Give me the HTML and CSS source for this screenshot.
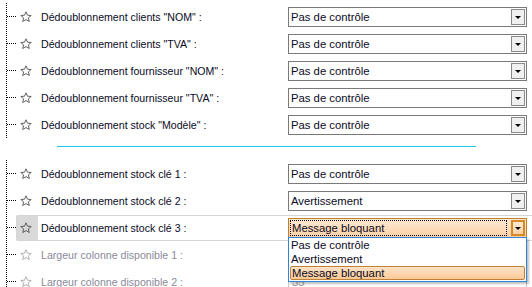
FILE: index.html
```html
<!DOCTYPE html>
<html lang="fr">
<head>
  <meta charset="UTF-8" />
  <title>Paramètres</title>
  <link rel="stylesheet" href="styles.css">
</head>
<body>
  <div class="tree">
    <div class="group">
      <div class="row">
        <span class="branch"></span>
        <span class="star"><svg viewBox="0 0 12 12"><path d="M6 .8l1.5 3.4 3.7.3-2.8 2.4.9 3.6L6 8.6 2.7 10.5l.9-3.6L.8 4.5l3.7-.3z"/></svg></span>
        <span class="label">Dédoublonnement clients "NOM" :</span>
        <div class="combo"><span class="value">Pas de contrôle</span><span class="btn"></span></div>
      </div>
      <div class="row">
        <span class="branch"></span>
        <span class="star"><svg viewBox="0 0 12 12"><path d="M6 .8l1.5 3.4 3.7.3-2.8 2.4.9 3.6L6 8.6 2.7 10.5l.9-3.6L.8 4.5l3.7-.3z"/></svg></span>
        <span class="label">Dédoublonnement clients "TVA" :</span>
        <div class="combo"><span class="value">Pas de contrôle</span><span class="btn"></span></div>
      </div>
      <div class="row">
        <span class="branch"></span>
        <span class="star"><svg viewBox="0 0 12 12"><path d="M6 .8l1.5 3.4 3.7.3-2.8 2.4.9 3.6L6 8.6 2.7 10.5l.9-3.6L.8 4.5l3.7-.3z"/></svg></span>
        <span class="label">Dédoublonnement fournisseur "NOM" :</span>
        <div class="combo"><span class="value">Pas de contrôle</span><span class="btn"></span></div>
      </div>
      <div class="row">
        <span class="branch"></span>
        <span class="star"><svg viewBox="0 0 12 12"><path d="M6 .8l1.5 3.4 3.7.3-2.8 2.4.9 3.6L6 8.6 2.7 10.5l.9-3.6L.8 4.5l3.7-.3z"/></svg></span>
        <span class="label">Dédoublonnement fournisseur "TVA" :</span>
        <div class="combo"><span class="value">Pas de contrôle</span><span class="btn"></span></div>
      </div>
      <div class="row">
        <span class="branch"></span>
        <span class="star"><svg viewBox="0 0 12 12"><path d="M6 .8l1.5 3.4 3.7.3-2.8 2.4.9 3.6L6 8.6 2.7 10.5l.9-3.6L.8 4.5l3.7-.3z"/></svg></span>
        <span class="label">Dédoublonnement stock "Modèle" :</span>
        <div class="combo"><span class="value">Pas de contrôle</span><span class="btn"></span></div>
      </div>
    </div>

    <div class="separator"><hr></div>

    <div class="group">
      <div class="row">
        <span class="branch"></span>
        <span class="star"><svg viewBox="0 0 12 12"><path d="M6 .8l1.5 3.4 3.7.3-2.8 2.4.9 3.6L6 8.6 2.7 10.5l.9-3.6L.8 4.5l3.7-.3z"/></svg></span>
        <span class="label">Dédoublonnement stock clé 1 :</span>
        <div class="combo"><span class="value">Pas de contrôle</span><span class="btn"></span></div>
      </div>
      <div class="row">
        <span class="branch"></span>
        <span class="star"><svg viewBox="0 0 12 12"><path d="M6 .8l1.5 3.4 3.7.3-2.8 2.4.9 3.6L6 8.6 2.7 10.5l.9-3.6L.8 4.5l3.7-.3z"/></svg></span>
        <span class="label">Dédoublonnement stock clé 2 :</span>
        <div class="combo"><span class="value">Avertissement</span><span class="btn"></span></div>
      </div>
      <div class="row current">
        <span class="branch"></span>
        <div class="hilite">
          <span class="star"><svg viewBox="0 0 12 12"><path d="M6 .8l1.5 3.4 3.7.3-2.8 2.4.9 3.6L6 8.6 2.7 10.5l.9-3.6L.8 4.5l3.7-.3z"/></svg></span>
          <span class="label">Dédoublonnement stock clé 3 :</span>
          <div class="combo open">
            <span class="value"><span class="focus">Message bloquant</span></span><span class="btn"></span>
            <ul class="list">
              <li>Pas de contrôle</li>
              <li>Avertissement</li>
              <li class="sel">Message bloquant</li>
            </ul>
          </div>
        </div>
      </div>
      <div class="row disabled">
        <span class="branch"></span>
        <span class="star"><svg viewBox="0 0 12 12"><path d="M6 .8l1.5 3.4 3.7.3-2.8 2.4.9 3.6L6 8.6 2.7 10.5l.9-3.6L.8 4.5l3.7-.3z"/></svg></span>
        <span class="label">Largeur colonne disponible 1 :</span>
        <div class="field"></div>
      </div>
      <div class="row disabled">
        <span class="branch"></span>
        <span class="star"><svg viewBox="0 0 12 12"><path d="M6 .8l1.5 3.4 3.7.3-2.8 2.4.9 3.6L6 8.6 2.7 10.5l.9-3.6L.8 4.5l3.7-.3z"/></svg></span>
        <span class="label">Largeur colonne disponible 2 :</span>
        <div class="field">35</div>
      </div>
    </div>
  </div>
</body>
</html>
```

FILE: styles.css
```css
body {
  margin: 0;
  padding: 3px 0 0 0;
  font-family: "Liberation Sans", Arial, sans-serif;
  font-size: 11px;
  color: #0a0a1e;
  background: #fff;
  overflow: hidden;
}
.tree {
  padding-left: 6px;
}
.group {
  border-left: 1px dotted #000;
}
.row {
  display: flex;
  align-items: center;
  height: 27px;
}
.branch {
  width: 9px;
  border-top: 1px dotted #000;
  flex: none;
}
.star {
  width: 12px;
  height: 12px;
  margin-left: 4px;
  flex: none;
}
.star svg {
  display: block;
  width: 12px;
  height: 12px;
  fill: none;
  stroke: #505050;
  stroke-width: 0.9;
}
.label {
  margin-left: 9px;
  width: 247px;
  flex: none;
  font-size: 10.6px;
  white-space: nowrap;
}
.combo, .field {
  position: relative;
  display: flex;
  align-items: center;
  width: 239px;
  height: 20px;
  box-sizing: border-box;
  border: 1px solid #7a7a7a;
  background: #fff;
  font-size: 11.3px;
}
.combo .value {
  flex: 1;
  padding-left: 2px;
  line-height: 16px;
}
.combo .btn {
  width: 14px;
  height: 16px;
  margin-right: 1px;
  box-sizing: border-box;
  border: 1px solid #8a8a8a;
  background: #f0f0f0;
  position: relative;
}
.combo .btn::after {
  content: "";
  position: absolute;
  left: 3px;
  top: 6px;
  border-left: 3px solid transparent;
  border-right: 3px solid transparent;
  border-top: 3px solid #000;
}
.separator {
  height: 22px;
  padding-top: 8px;
  box-sizing: border-box;
}
.separator hr {
  margin: 0 0 0 51px;
  width: 419px;
  border: none;
  border-top: 1px solid #1cc8e6;
}

/* current row */
.current .hilite {
  display: flex;
  align-items: center;
  flex: 1;
  height: 26px;
  box-sizing: border-box;
  border: 1px solid #d6d6d6;
  border-right: none;
  border-radius: 2px 0 0 2px;
  background: linear-gradient(to right, #d9d9d9 0, #d9d9d9 21px, #fff 21px);
}
.current .hilite .star {
  margin-left: 3px;
}
.current .hilite .label {
  margin-left: 9px;
}
.combo.open {
  border-color: #c0802c;
  background: linear-gradient(#fde9d4, #fbd0a6);
}
.combo.open .value {
  padding: 1px;
}
.focus {
  display: block;
  border: 1px dotted #000;
  line-height: 14px;
  padding-left: 1px;
  margin-right: 3px;
}
.combo.open .btn {
  border: 2px solid #d78a24;
  background: linear-gradient(#fde9d4, #fbd0a6);
}
.combo.open .btn::after {
  left: 2px;
  top: 5px;
}
.list {
  position: absolute;
  left: -1px;
  top: 18px;
  width: 239px;
  margin: 0;
  padding: 0;
  list-style: none;
  box-sizing: border-box;
  border: 1px solid #2f86d8;
  background: #fff;
  box-shadow: 2px 2px 2px rgba(0, 0, 0, 0.25);
  z-index: 2;
}
.list li {
  height: 14px;
  line-height: 14px;
  padding-left: 2px;
}
.list li.sel {
  margin: 0 1px 1px 1px;
  padding-left: 1px;
  border: 1px solid #c08038;
  border-radius: 2px;
  background: linear-gradient(#fde3c8, #fbc995);
  height: 12px;
  line-height: 12px;
}

/* disabled rows */
.disabled .label {
  color: #8a8a9a;
}
.disabled .star svg {
  stroke: #a8a8a8;
}
.field {
  border-color: #c8c8c8;
  color: #9a9a9a;
  padding-left: 3px;
}
```
